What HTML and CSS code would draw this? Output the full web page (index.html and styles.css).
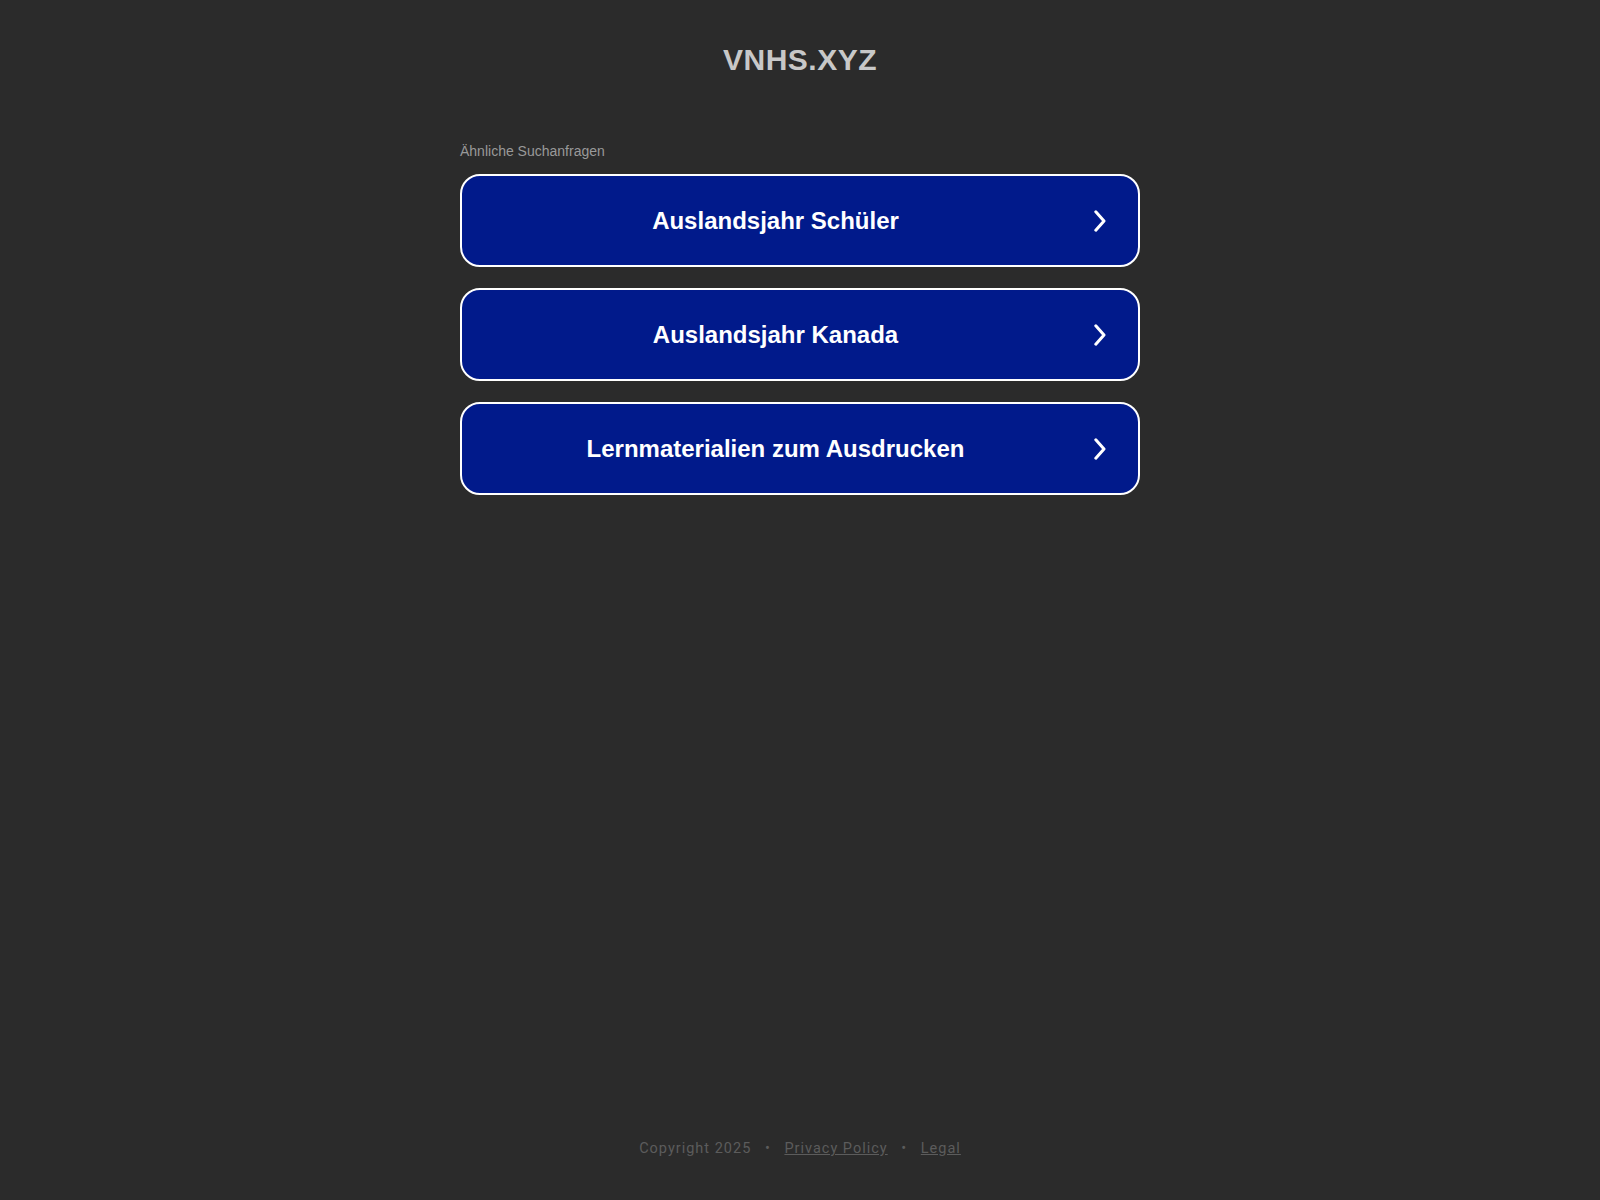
FILE: index.html
```html
<!DOCTYPE html>
<html>
<head>
  <title>vnhs.xyz</title>
  <meta charset="UTF-8">
  <meta name="viewport" content="width=device-width, initial-scale=1.0">
  <link rel="stylesheet" href="styles.css">
</head>
<body>
  <div class="page">
    <header class="header">
      <h1>VNHS.XYZ</h1>
    </header>
    <main class="content">
      <p class="label">Ähnliche Suchanfragen</p>
      <a class="link" href="#">
        <span class="link-text">Auslandsjahr Schüler</span>
        <svg class="arrow" width="12" height="22" viewBox="0 0 12 22"><path d="M1.8 1.8 L10 11 L1.8 20.2" fill="none" stroke="#fff" stroke-width="3" stroke-linecap="round" stroke-linejoin="round"/></svg>
      </a>
      <a class="link" href="#">
        <span class="link-text">Auslandsjahr Kanada</span>
        <svg class="arrow" width="12" height="22" viewBox="0 0 12 22"><path d="M1.8 1.8 L10 11 L1.8 20.2" fill="none" stroke="#fff" stroke-width="3" stroke-linecap="round" stroke-linejoin="round"/></svg>
      </a>
      <a class="link" href="#">
        <span class="link-text">Lernmaterialien zum Ausdrucken</span>
        <svg class="arrow" width="12" height="22" viewBox="0 0 12 22"><path d="M1.8 1.8 L10 11 L1.8 20.2" fill="none" stroke="#fff" stroke-width="3" stroke-linecap="round" stroke-linejoin="round"/></svg>
      </a>
    </main>
    <footer class="footer">
      <span>Copyright 2025</span>
      <span class="sep">&bull;</span>
      <a href="#">Privacy Policy</a>
      <span class="sep">&bull;</span>
      <a href="#">Legal</a>
    </footer>
  </div>
</body>
</html>
```

FILE: styles.css
```css
body{
  margin:0;
  background:#2b2b2b;
  font-family:"Liberation Sans", Arial, sans-serif;
}
.page{
  display:flex;
  flex-direction:column;
  align-items:center;
  min-height:100vh;
}
.header{
  padding-top:43px;
  text-align:center;
}
.header h1{
  margin:0;
  font-size:30px;
  line-height:34px;
  font-weight:bold;
  letter-spacing:0.5px;
  color:#c8c8c8;
}
.content{
  width:680px;
  margin-top:66px;
  flex:1;
}
.label{
  margin:0 0 15px 0;
  font-size:14px;
  line-height:16px;
  color:#999;
}
.link{
  display:flex;
  align-items:center;
  box-sizing:border-box;
  height:93px;
  margin-bottom:21px;
  padding:0 32px 0 0;
  background:#011a8b;
  border:2px solid #fff;
  border-radius:20px;
  text-decoration:none;
  color:#fff;
}
.link-text{
  flex:1;
  margin-right:5px;
  text-align:center;
  font-size:24px;
  font-weight:bold;
}
.arrow{
  display:block;
}
.footer{
  padding-bottom:43px;
  font-family:Roboto, "Liberation Sans", sans-serif;
  font-size:14.5px;
  letter-spacing:1px;
  color:#5c5c5c;
}
.footer a{
  color:#5c5c5c;
}
.sep{
  margin:0 9px;
}
```
